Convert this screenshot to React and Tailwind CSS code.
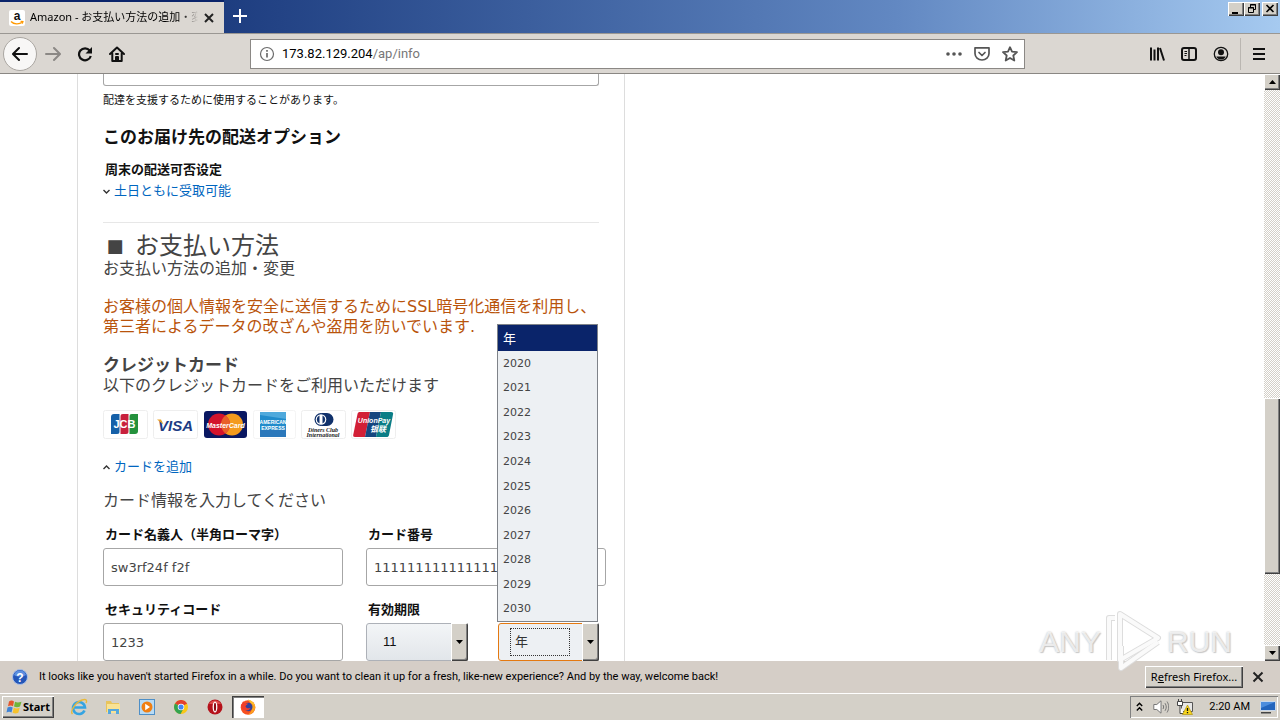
/**
 * @file App.jsx
 * @description Desktop with a browser window showing the payment form,
 * the refresh notification bar and the taskbar.
 */
import { useState } from "react";

const YEARS = ["2020", "2021", "2022", "2023", "2024", "2025", "2026", "2027", "2028", "2029", "2030"];

// Classic raised 3D edge shared by buttons and scrollbar parts
const RAISED =
  "bg-[#d4d0c8] shadow-[inset_1px_1px_0_#fff,inset_-1px_-1px_0_#404040,inset_-2px_-2px_0_#808080]";

const ICON_BTN = "flex h-8 w-8 shrink-0 items-center justify-center";
const FIELD =
  "block h-[38px] w-full rounded-[3px] border border-[#a6a6a6] bg-white px-[7px] text-[13px] text-[#444] outline-none";
const LABEL = "block pl-0.5 text-[13px] font-bold leading-5 text-[#111]";

// ── Title bar ───────────────────────────────────────────────────────────────
function TitleBar() {
  return (
    <header className="flex h-[33px] shrink-0 items-start justify-between bg-linear-to-r from-[#0a246a] from-0% via-[#6288c2] via-70% to-[#a6caf0]">
      <div className="flex h-full items-start">
        <div className="flex h-full w-56 items-center border-t-2 border-[#0a246a] bg-[#dbd7d2] pl-[9px]">
          <svg className="h-4 w-4 shrink-0" viewBox="0 0 16 16">
            <rect width="16" height="16" rx="2" fill="#fff" />
            <text x="8" y="10" textAnchor="middle" fontSize="12" fontWeight="bold" fontFamily="Liberation Sans, sans-serif" fill="#111">a</text>
            <path d="M2 11.5C5 14.5 10 14.8 13.5 12M11.6 11.4l2.3.2-.6 2" fill="none" stroke="#f90" strokeWidth="1.3" />
          </svg>
          <span className="ml-[5px] w-[168px] shrink-0 whitespace-nowrap bg-linear-to-r from-black from-88% to-[#dbd7d2] bg-clip-text text-[11px] text-transparent">
            Amazon - お支払い方法の追加・変
          </span>
          <button aria-label="Close tab" className="ml-[3px] p-0.5">
            <svg className="h-3 w-3" viewBox="0 0 12 12" stroke="#222" strokeWidth="2">
              <path d="M2 2l8 8M10 2l-8 8" />
            </svg>
          </button>
        </div>
        <button aria-label="New tab" className={ICON_BTN}>
          <svg className="h-4 w-4" viewBox="0 0 16 16" stroke="#fff" strokeWidth="2">
            <path d="M8 1v14M1 8h14" />
          </svg>
        </button>
      </div>
      <div className="flex pr-0.5 pt-0.5">
        <button aria-label="Minimize" className={`h-[14px] w-4 ${RAISED}`}>
          <svg viewBox="0 0 16 14"><path d="M4 10h6v2H4z" /></svg>
        </button>
        <button aria-label="Restore" className={`h-[14px] w-4 ${RAISED}`}>
          <svg viewBox="0 0 16 14" fill="none" stroke="#000">
            <path d="M6.500 5V2.500h5v5H10M6 3h6M4.500 5.500h5v5h-5zM4 6h6" />
          </svg>
        </button>
        <button aria-label="Close" className={`ml-0.5 h-[14px] w-4 ${RAISED}`}>
          <svg viewBox="0 0 16 14" stroke="#000" strokeWidth="1.6"><path d="M4.500 3l7 7M11.500 3l-7 7" /></svg>
        </button>
      </div>
    </header>
  );
}

// ── Navigation toolbar ──────────────────────────────────────────────────────
function Toolbar() {
  const [url, setUrl] = useState("173.82.129.204/ap/info");
  const slash = url.indexOf("/");

  return (
    <nav className="flex h-[41px] shrink-0 items-center border-b border-t border-b-[#8a8783] border-t-[#9a9793] bg-[#dbd7d2] px-[3px]">
      <button aria-label="Back" className="flex h-[34px] w-[34px] items-center justify-center rounded-full border border-[#aaa6a1] bg-[#f8f7f6]">
        <svg className="h-4 w-4" viewBox="0 0 16 16" fill="none" stroke="#111" strokeWidth="2" strokeLinecap="round" strokeLinejoin="round">
          <path d="M15 8H1.500M7 2L1 8l6 6" />
        </svg>
      </button>
      <button aria-label="Forward" className={ICON_BTN}>
        <svg className="h-4 w-4" viewBox="0 0 16 16" fill="none" stroke="#8b8885" strokeWidth="2" strokeLinecap="round" strokeLinejoin="round">
          <path d="M1 8h13.500M9 2l6 6-6 6" />
        </svg>
      </button>
      <button aria-label="Reload" className={ICON_BTN}>
        <svg className="h-4 w-4" viewBox="0 0 16 16" fill="none" stroke="#111" strokeWidth="2.200">
          <path d="M12.700 4.500A6 6 0 1 0 13.800 10" />
          <path d="M15 1v6.500H8.500z" fill="#111" stroke="none" />
        </svg>
      </button>
      <button aria-label="Home" className={ICON_BTN}>
        <svg className="h-4 w-4" viewBox="0 0 16 16" fill="none" stroke="#111" strokeWidth="2" strokeLinejoin="round" strokeLinecap="round">
          <path d="M1 8l7-6.500L15 8M3.300 7.500V15h9.400V7.500" />
          <path d="M7 15v-4h2v4M7 8h2" />
        </svg>
      </button>

      <div className="relative ml-[117px] flex h-[30px] w-[775px] items-center border border-[#8b8885] bg-white pl-2">
        <svg className="h-4 w-4 shrink-0" viewBox="0 0 16 16" fill="none" stroke="#6b6b6b">
          <circle cx="8" cy="8" r="6.500" strokeWidth="1.200" />
          <path d="M8 7v4.500M8 4v1.700" strokeWidth="1.700" />
        </svg>
        <label className="relative ml-[7px] flex-1 font-[Roboto,sans-serif] text-[13px]">
          <input
            aria-label="Address"
            value={url}
            onChange={(e) => setUrl(e.target.value)}
            className="w-full bg-transparent text-transparent caret-black outline-none"
          />
          <span className="pointer-events-none absolute left-0 top-0 text-[#777]">
            <span className="text-black">{slash < 0 ? url : url.slice(0, slash)}</span>
            {slash < 0 ? "" : url.slice(slash)}
          </span>
        </label>
        <div className="flex gap-3 pr-1.5">
          <button aria-label="Page actions">
            <svg className="h-4 w-4" viewBox="0 0 16 16" fill="#555">
              <circle cx="2" cy="8" r="1.800" /><circle cx="8" cy="8" r="1.800" /><circle cx="14" cy="8" r="1.800" />
            </svg>
          </button>
          <button aria-label="Save to Pocket">
            <svg className="h-4 w-4" viewBox="0 0 16 16" fill="none" stroke="#555" strokeWidth="1.700" strokeLinecap="round" strokeLinejoin="round">
              <path d="M1 1.800h14v5.700a7 6.500 0 0 1-14 0z" />
              <path d="M5 6.500l3 3 3-3" />
            </svg>
          </button>
          <button aria-label="Bookmark">
            <svg className="h-4 w-4" viewBox="0 0 16 16" fill="none" stroke="#555" strokeWidth="1.800" strokeLinejoin="round">
              <path d="M8 1.200l2 4.500 5 .5-3.700 3.300 1 5L8 12l-4.300 2.500 1-5L1 6.200l5-.5z" />
            </svg>
          </button>
        </div>
      </div>

      <div className="ml-auto flex h-full items-center">
        <button aria-label="Library" className={ICON_BTN}>
          <svg className="h-4 w-4" viewBox="0 0 16 16" stroke="#111" strokeWidth="2">
            <path d="M2 1.500v13M5.500 3.500v11M9 1.500v13M11 2l4 12.500" />
          </svg>
        </button>
        <button aria-label="Sidebar" className={ICON_BTN}>
          <svg className="h-4 w-4" viewBox="0 0 16 16" fill="none" stroke="#111" strokeWidth="2">
            <rect x="1" y="2" width="14" height="12" rx="2" />
            <path d="M8 2v12" strokeWidth="1.500" />
            <path d="M3.500 5.500h2.500M3.500 7.500h2.500M3.500 9.500h2" strokeWidth="1" />
          </svg>
        </button>
        <button aria-label="Account" className={ICON_BTN}>
          <svg className="h-4 w-4" viewBox="0 0 16 16">
            <circle cx="8" cy="8" r="6.700" fill="none" stroke="#111" strokeWidth="1.300" />
            <circle cx="8" cy="6.300" r="3" fill="#111" />
            <path d="M3.300 10.500h9.400C11.500 13 9.700 13.500 8 13.500s-3.500-.5-4.700-3z" fill="#111" />
          </svg>
        </button>
        <div className="ml-[3px] h-8 w-px bg-[#bab6b1]" />
        <button aria-label="Menu" className="flex h-8 w-9 items-center justify-center">
          <svg className="h-4 w-4" viewBox="0 0 16 16" stroke="#111" strokeWidth="2">
            <path d="M2 3h12M2 8h12M2 13h12" />
          </svg>
        </button>
      </div>
    </nav>
  );
}

// ── Card brand logos ────────────────────────────────────────────────────────
function CardLogos() {
  const box = "h-[29px] w-[45px]";
  return (
    <div className="mt-[14px] flex gap-[5px] font-[Liberation_Sans,sans-serif]">
      <svg className={box} viewBox="0 0 45 29">
        <rect x=".5" y=".5" width="44" height="28" rx="2" fill="#fff" stroke="#eee" />
        <path d="M11 4h6v17a3 3 0 0 1-3 3H8V7a3 3 0 0 1 3-3z" fill="#1560a8" />
        <path d="M20 4h6v17a3 3 0 0 1-3 3h-6V7a3 3 0 0 1 3-3z" fill="#c8203c" />
        <path d="M29 4h6v17a3 3 0 0 1-3 3h-6V7a3 3 0 0 1 3-3z" fill="#24913c" />
        <path d="M17 4v20M26 4v20" stroke="#fff" />
        <text x="21.500" y="18" textAnchor="middle" fontSize="11" fontWeight="bold" fill="#fff">JCB</text>
      </svg>
      <svg className={box} viewBox="0 0 45 29">
        <rect x=".5" y=".5" width="44" height="28" rx="2" fill="#fff" stroke="#eee" />
        <text x="22.500" y="20.500" textAnchor="middle" fontSize="15" fontWeight="bold" fontStyle="italic" fill="#1d3c83">VISA</text>
        <path d="M4 9.500h4l2.500 5z" fill="#e9a32a" />
      </svg>
      <svg className={box} viewBox="0 0 45 29">
        <rect x="1" y="1" width="43" height="27" rx="3" fill="#0a1761" />
        <circle cx="29" cy="14.500" r="11" fill="#f49b1d" />
        <circle cx="16" cy="14.500" r="11" fill="#d3142c" />
        <path d="M22.500 5.600a11 11 0 0 1 0 17.800a11 11 0 0 1 0-17.800z" fill="#e9602a" />
        <text x="22.500" y="17.500" textAnchor="middle" fontSize="7" fontWeight="bold" fontStyle="italic" fill="#fff">MasterCard</text>
      </svg>
      <svg className="h-[29px] w-[43px]" viewBox="0 0 43 29">
        <rect x=".5" y=".5" width="42" height="28" rx="2" fill="#fff" stroke="#f4f4f4" />
        <rect x="7" y="2" width="26" height="25" fill="#218bcb" />
        <path d="M7 2h26v7L7 5z" fill="#4fa9dc" />
        <path d="M7 20h26v7H7z" fill="#2b78bb" />
        <text x="20" y="14" textAnchor="middle" fontSize="5" fontWeight="bold" fill="#fff">AMERICAN</text>
        <text x="20" y="20" textAnchor="middle" fontSize="5" fontWeight="bold" fill="#fff">EXPRESS</text>
      </svg>
      <svg className={box} viewBox="0 0 45 29">
        <rect x=".5" y=".5" width="44" height="28" rx="2" fill="#fff" stroke="#eee" />
        <path d="M21 3h5a6.500 6.500 0 0 1 0 13h-5z" fill="#10316b" />
        <circle cx="20" cy="9.500" r="6.500" fill="#10316b" />
        <circle cx="20" cy="9.500" r="5.300" fill="#fff" />
        <path d="M18.500 5.500v8a4.300 4.300 0 0 1 0-8zM21.500 5.500v8a4.300 4.300 0 0 0 0-8z" fill="#10316b" />
        <text x="22" y="21.500" textAnchor="middle" fontSize="6" fontStyle="italic" fontWeight="bold" fontFamily="Liberation Serif, serif" fill="#222">Diners Club</text>
        <text x="22" y="27" textAnchor="middle" fontSize="6" fontStyle="italic" fontWeight="bold" fontFamily="Liberation Serif, serif" fill="#222">International</text>
      </svg>
      <svg className={box} viewBox="0 0 45 29">
        <rect x=".5" y=".5" width="44" height="28" rx="2" fill="#fff" stroke="#eee" />
        <path d="M9 2h10l-5 25H4c-2 0-2-1-1.700-2.500L6.500 4C7 2.500 7.500 2 9 2z" fill="#d21f36" />
        <path d="M19 2h11l-5 25H14z" fill="#15467f" />
        <path d="M30 2h10c2 0 2.500 1 2 2.500L38 25c-.4 1.500-1 2-2.500 2H25z" fill="#0a7d86" />
        <text x="23" y="13" textAnchor="middle" fontSize="7" fontWeight="bold" fontStyle="italic" fill="#fff">UnionPay</text>
        <text x="27" y="22" textAnchor="middle" fontSize="8" fontWeight="bold" fontStyle="italic" fontFamily="Noto Sans CJK SC, sans-serif" fill="#fff">银联</text>
      </svg>
    </div>
  );
}

function Chevron({ up }) {
  return (
    <svg className="mr-1 h-[7px] w-[7px]" viewBox="0 0 7 7" fill="none" stroke="#333" strokeWidth="1.400">
      <path d={up ? "M.5 5l3-3 3 3" : "M.5 2l3 3 3-3"} />
    </svg>
  );
}

function DropArrow() {
  return (
    <span className={`pointer-events-none absolute inset-y-0 right-0 flex w-[17px] items-center justify-center rounded-r-[2px] ${RAISED}`}>
      <svg className="h-1 w-[7px]" viewBox="0 0 7 4"><path d="M0 0h7L3.500 4z" /></svg>
    </span>
  );
}

// ── Payment form ────────────────────────────────────────────────────────────
function PaymentForm() {
  const [year, setYear] = useState("年");

  return (
    <form className="ml-[77px] h-full w-[548px] shrink-0 border-x border-[#ddd] px-[25px] font-[DejaVu_Sans,Noto_Sans_CJK_JP,sans-serif] text-[#444]">
      <input aria-label="電話番号" className="block h-3 w-full rounded-b-[3px] border border-t-0 border-[#a6a6a6] outline-none" />
      <p className="mt-[5px] text-[11px] leading-5 text-[#111]">配達を支援するために使用することがあります。</p>
      <h3 className="mt-[14px] text-[17px] font-bold leading-6 text-[#111]">このお届け先の配送オプション</h3>
      <p className="mt-[11px] pl-0.5 text-[13px] font-bold leading-5 text-[#111]">周末の配送可否设定</p>
      <a href="#weekend" className="mt-px flex items-center text-[13px] leading-5 text-[#0066c0]">
        <Chevron />
        土日ともに受取可能
      </a>

      <hr className="mt-[21px] border-[#e7e7e7]" />

      <h2 className="mt-[10px] flex items-center text-[24px] leading-[26px]">
        <span className="mr-2 w-6 text-center text-[18px]">■</span>
        お支払い方法
      </h2>
      <p className="text-[16px] leading-5">お支払い方法の追加・変更</p>
      <p className="mt-[18px] whitespace-nowrap text-[16px] leading-5 text-[#b9540c]">
        お客様の個人情報を安全に送信するためにSSL暗号化通信を利用し、
        <br />
        第三者によるデータの改ざんや盗用を防いでいます.
      </p>
      <h3 className="mt-[18px] text-[17px] font-bold leading-[21px]">クレジットカード</h3>
      <p className="text-[16px] leading-5">以下のクレジットカードをご利用いただけます</p>
      <CardLogos />
      <a href="#add-card" className="mt-[18px] flex items-center text-[13px] leading-5 text-[#0066c0]">
        <Chevron up />
        カードを追加
      </a>
      <p className="mt-[14px] text-[16px] leading-5">カード情報を入力してください</p>

      <div className="mt-[14px] grid grid-cols-[240px_240px] gap-x-[23px] gap-y-[14px]">
        <div>
          <label htmlFor="holder" className={LABEL}>カード名義人（半角ローマ字）</label>
          <input id="holder" defaultValue="sw3rf24f f2f" className={`mt-[3px] ${FIELD}`} />
        </div>
        <div>
          <label htmlFor="number" className={LABEL}>カード番号</label>
          <input id="number" defaultValue="1111111111111111" className={`mt-[3px] ${FIELD}`} />
        </div>
        <div>
          <label htmlFor="cvv" className={LABEL}>セキュリティコード</label>
          <input id="cvv" defaultValue="1233" className={`mt-[3px] ${FIELD}`} />
        </div>
        <div>
          <label htmlFor="month" className={LABEL}>有効期限</label>
          <div className="mt-[3px] flex gap-[30px]">
            <div className="relative h-[38px] w-[102px]">
              <select id="month" defaultValue="11" className="h-full w-full appearance-none rounded-[3px] border border-[#adb1b8] bg-linear-to-b from-[#f3f5f7] to-[#e2e6ea] pl-4 font-[Liberation_Sans,sans-serif] text-[13px] text-[#111] outline-none">
                <option>11</option>
              </select>
              <DropArrow />
            </div>
            <div className="relative h-[38px] w-[101px]">
              <select
                aria-label="年"
                value={year}
                onChange={(e) => setYear(e.target.value)}
                className="h-full w-full appearance-none rounded-[3px] border border-[#e47911] bg-[#edf0f3] pl-4 text-[13px] text-[#333] outline-none"
              >
                {["年", ...YEARS].map((y) => (
                  <option key={y}>{y}</option>
                ))}
              </select>
              <span className="pointer-events-none absolute inset-y-[5px] left-3 w-[60px] border border-dotted border-[#333]" />
              <DropArrow />
              <ul role="listbox" aria-label="年" className="absolute bottom-full right-px mb-px flex h-[298px] w-[101px] flex-col border border-[#7f8389] bg-[#edf0f3] text-[11px]">
                {["年", ...YEARS].map((y) => (
                  <li
                    key={y}
                    role="option"
                    aria-selected={y === year}
                    onClick={() => setYear(y)}
                    className={
                      y === year
                        ? "flex h-[26px] shrink-0 items-center bg-[#0a246a] pl-[5px] text-[13px] leading-none text-white"
                        : "flex flex-1 items-center pl-[5px] leading-none"
                    }
                  >
                    {y}
                  </li>
                ))}
              </ul>
            </div>
          </div>
        </div>
      </div>
    </form>
  );
}

function Scrollbar() {
  return (
    <div className="flex w-4 shrink-0 flex-col bg-[repeating-conic-gradient(#d4d0c8_0_25%,#fff_0_50%)] bg-[length:2px_2px]">
      <button aria-label="Scroll up" className={`flex h-4 items-center justify-center ${RAISED}`}>
        <svg className="h-1 w-[7px]" viewBox="0 0 7 4"><path d="M0 4h7L3.500 0z" /></svg>
      </button>
      <div className="grow-308" />
      <div className={`grow-176 ${RAISED}`} />
      <div className="grow-71" />
      <button aria-label="Scroll down" className={`flex h-4 items-center justify-center ${RAISED}`}>
        <svg className="h-1 w-[7px]" viewBox="0 0 7 4"><path d="M0 0h7L3.500 4z" /></svg>
      </button>
    </div>
  );
}

function Watermark() {
  return (
    <div className="pointer-events-none absolute bottom-[46px] right-12 flex items-center font-[Liberation_Sans,sans-serif] text-[30px] leading-none text-white/70 [text-shadow:0_0_2px_#bbb,1px_1px_1px_#ccc]">
      <span>ANY</span>
      <svg className="mx-1 h-16 w-[58px]" viewBox="0 0 58 64" fill="none" strokeLinejoin="round">
        <g stroke="#ddd" strokeWidth="6">
          <path d="M4 50V8h6M15 4l38 24-38 22z" />
          <path d="M53 32L16 58V36" />
        </g>
        <g stroke="#fafafa" strokeWidth="4">
          <path d="M4 50V8h6M15 4l38 24-38 22z" />
          <path d="M53 32L16 58V36" />
        </g>
      </svg>
      <span>RUN</span>
    </div>
  );
}

// ── Notification bar ────────────────────────────────────────────────────────
function Notification() {
  return (
    <div className="flex h-8 shrink-0 items-center bg-[#d5cec7] pl-3 pr-3.5 text-[11px] text-black">
      <svg className="h-4 w-4" viewBox="0 0 16 16">
        <circle cx="8" cy="8" r="7.500" fill="#2456b8" stroke="#a9bfe6" />
        <path d="M2 6a6.300 6.300 0 0 1 12 0c-3 2-9 2-12 0z" fill="#5d8fe0" />
        <text x="8" y="12.500" textAnchor="middle" fontSize="12" fontWeight="bold" fontFamily="Liberation Sans, sans-serif" fill="#fff">?</text>
      </svg>
      <span className="ml-[11px] whitespace-nowrap font-[Roboto,sans-serif]">
        It looks like you haven't started Firefox in a while. Do you want to clean it up for a fresh, like-new experience? And by the way, welcome back!
      </span>
      <button className={`ml-auto h-[22px] w-[98px] whitespace-nowrap ${RAISED}`}>
        R<span className="underline">e</span>fresh Firefox...
      </button>
      <button aria-label="Dismiss" className="ml-[7px] p-0.5">
        <svg className="h-3 w-3" viewBox="0 0 12 12" stroke="#222" strokeWidth="2">
          <path d="M1.500 1.500l9 9M10.500 1.500l-9 9" />
        </svg>
      </button>
    </div>
  );
}

// ── Taskbar ─────────────────────────────────────────────────────────────────
function Taskbar() {
  const slot = "flex h-[22px] w-[34px] items-center justify-center";
  return (
    <footer className="flex h-[27px] shrink-0 items-center border-t border-white bg-[#d4d0c8] px-0.5 text-[11px] text-black">
      <button className={`flex h-[22px] w-[52px] items-center justify-center gap-px font-bold ${RAISED}`}>
        <svg className="h-4 w-4" viewBox="0 0 16 16">
          <path d="M3 2.500c2-1.500 3.500-1 5 0L7 7.300c-1.500-1-3-1-5 0z" fill="#e4562c" />
          <path d="M9 2.800c2 1 3.500 1 6.500 0L14 7.600c-2 1-4 1-6 0z" fill="#6fb53a" />
          <path d="M1.500 8.500c2-1 3.500-1 5.200 0l-1.200 5c-1.700-1-3-1-5 0z" fill="#3f83d6" />
          <path d="M7.800 8.700c2 1 3.700 1 5.900 0l-1.400 5c-2 1-3.700 1-5.700 0z" fill="#f6c22d" />
        </svg>
        Start
      </button>
      <div className="ml-2 flex items-center">
        <button aria-label="Internet Explorer" className={slot}>
          <svg className="h-[18px] w-[18px]" viewBox="0 0 18 18" fill="none">
            <path d="M14.500 12.500A6 6 0 1 1 15 9.500H4.500" stroke="#35a4e2" strokeWidth="2.600" />
            <path d="M2.500 16C-.5 13 6 4 12 2c5-1.500 5 1 4 3" stroke="#e9b93a" strokeWidth="1.400" />
          </svg>
        </button>
        <button aria-label="Explorer" className={slot}>
          <svg className="h-[18px] w-[18px]" viewBox="0 0 18 18">
            <path d="M2 3h5l1 2h7v9H2z" fill="#e8c45c" />
            <path d="M3 6h13v9H3z" fill="#f8e294" />
            <path d="M4 11h11v5h-3v-3H7v3H4z" fill="#56a7dc" />
          </svg>
        </button>
        <button aria-label="Media Player" className={slot}>
          <svg className="h-4 w-4" viewBox="0 0 16 16">
            <rect x=".5" y=".5" width="15" height="15" fill="#b8dbf5" stroke="#4e8fc7" />
            <circle cx="8" cy="8" r="5.500" fill="#f07f13" />
            <path d="M6.200 4.800v6.400L11 8z" fill="#fff" />
          </svg>
        </button>
        <button aria-label="Chrome" className={slot}>
          <svg className="h-[14px] w-[14px]" viewBox="0 0 16 16">
            <circle cx="8" cy="8" r="8" fill="#f9c718" />
            <path d="M8 8L1.100 4A8 8 0 0 1 15 4z" fill="#e2402f" />
            <path d="M8 8L1.100 4A8 8 0 0 0 7.500 16L11 9.500z" fill="#34a350" />
            <circle cx="8" cy="8" r="3.700" fill="#fff" />
            <circle cx="8" cy="8" r="2.900" fill="#4285f4" />
          </svg>
        </button>
        <button aria-label="Opera" className={slot}>
          <svg className="h-4 w-4" viewBox="0 0 16 16">
            <circle cx="8" cy="8" r="7.500" fill="#b5121b" />
            <path d="M2 5a6.800 6.800 0 0 1 12 0z" fill="#de4b4b" />
            <ellipse cx="8" cy="8" rx="2.400" ry="5.500" fill="#fff" />
            <ellipse cx="8" cy="8" rx="1.100" ry="4.300" fill="#8c0a12" />
          </svg>
        </button>
        <button aria-label="Firefox" className="flex h-[22px] w-8 items-center justify-center bg-white shadow-[inset_1px_1px_0_#404040,inset_2px_2px_0_#808080]">
          <svg className="h-4 w-4" viewBox="0 0 16 16">
            <circle cx="8" cy="8.500" r="7.300" fill="#f7501f" />
            <path d="M8 .5c4 1 7.500 4 7.300 8.500C15 5.500 11 6 8 .5z" fill="#fcc52b" />
            <path d="M15.300 8.500c-.5 4-3.500 7-7.500 7.300C12 13 13 9 11 4.500c2 .5 4 2 4.300 4z" fill="#fca41f" />
            <circle cx="8.300" cy="8" r="4.200" fill="#31429c" />
            <path d="M1 6c1-1 2-2 2-4 1 2 3 2.500 5 2.500C7 6 6 6 5.500 7.500c1 2 3 2 5 1.500-1 3-6 3-8.500 1z" fill="#ef3f2a" />
          </svg>
        </button>
      </div>

      <div className="ml-auto flex h-[22px] w-[148px] items-center pl-1.5 pr-0.5 shadow-[inset_1px_1px_0_#808080,inset_-1px_-1px_0_#fff]">
        <svg className="h-2.5 w-[7px]" viewBox="0 0 7 10" fill="none" stroke="#000" strokeWidth="1.400">
          <path d="M.8 4l2.700-2.700L6.200 4M.8 8.500l2.700-2.700 2.700 2.700" />
        </svg>
        <svg className="ml-2.5 h-4 w-4" viewBox="0 0 16 16" fill="none" stroke="#777">
          <path d="M.8 5.500h3L8 1.800v12.400L3.800 10.500h-3z" fill="#fff" />
          <path d="M10 6c.8 1.300.8 2.700 0 4M12 4.200c1.700 2.500 1.700 5.100 0 7.600M14 2.500c2.300 3.500 2.300 7.500 0 11" />
        </svg>
        <svg className="ml-2 h-4 w-4" viewBox="0 0 16 16">
          <path d="M4.500 3.500h11v9h-11z" fill="#e8e8e8" stroke="#555" />
          <path d="M.5 2.500h5v4h-5zM1.500 0v2.500M4.500 0v2.500M3 6.500v8h4" fill="#fff" stroke="#444" />
          <path d="M10.500 6l5 9.500h-10z" fill="#f8d51c" stroke="#a88a00" strokeWidth=".6" />
          <path d="M10.500 9v3M10.500 13v1.300" stroke="#111" strokeWidth="1.300" />
        </svg>
        <span className="ml-auto whitespace-nowrap font-[Roboto,sans-serif]">2:20 AM</span>
        <svg className="ml-2.5 h-4 w-4" viewBox="0 0 16 16">
          <path d="M.5 2.500h15v9H.5z" fill="#2365bd" stroke="#c9d8ea" />
          <path d="M1 3h14L1 9z" fill="#4c8ddd" />
          <path d="M1 13h10v1.500H1z" fill="#444" />
        </svg>
      </div>
    </footer>
  );
}

export default function App() {
  return (
    <div className="relative flex h-screen flex-col overflow-hidden bg-white font-[Noto_Sans,Noto_Sans_CJK_JP,sans-serif]">
      <TitleBar />
      <Toolbar />
      <main className="flex min-h-0 flex-1 justify-between">
        <PaymentForm />
        <Scrollbar />
      </main>
      <Notification />
      <Taskbar />
      <Watermark />
    </div>
  );
}
